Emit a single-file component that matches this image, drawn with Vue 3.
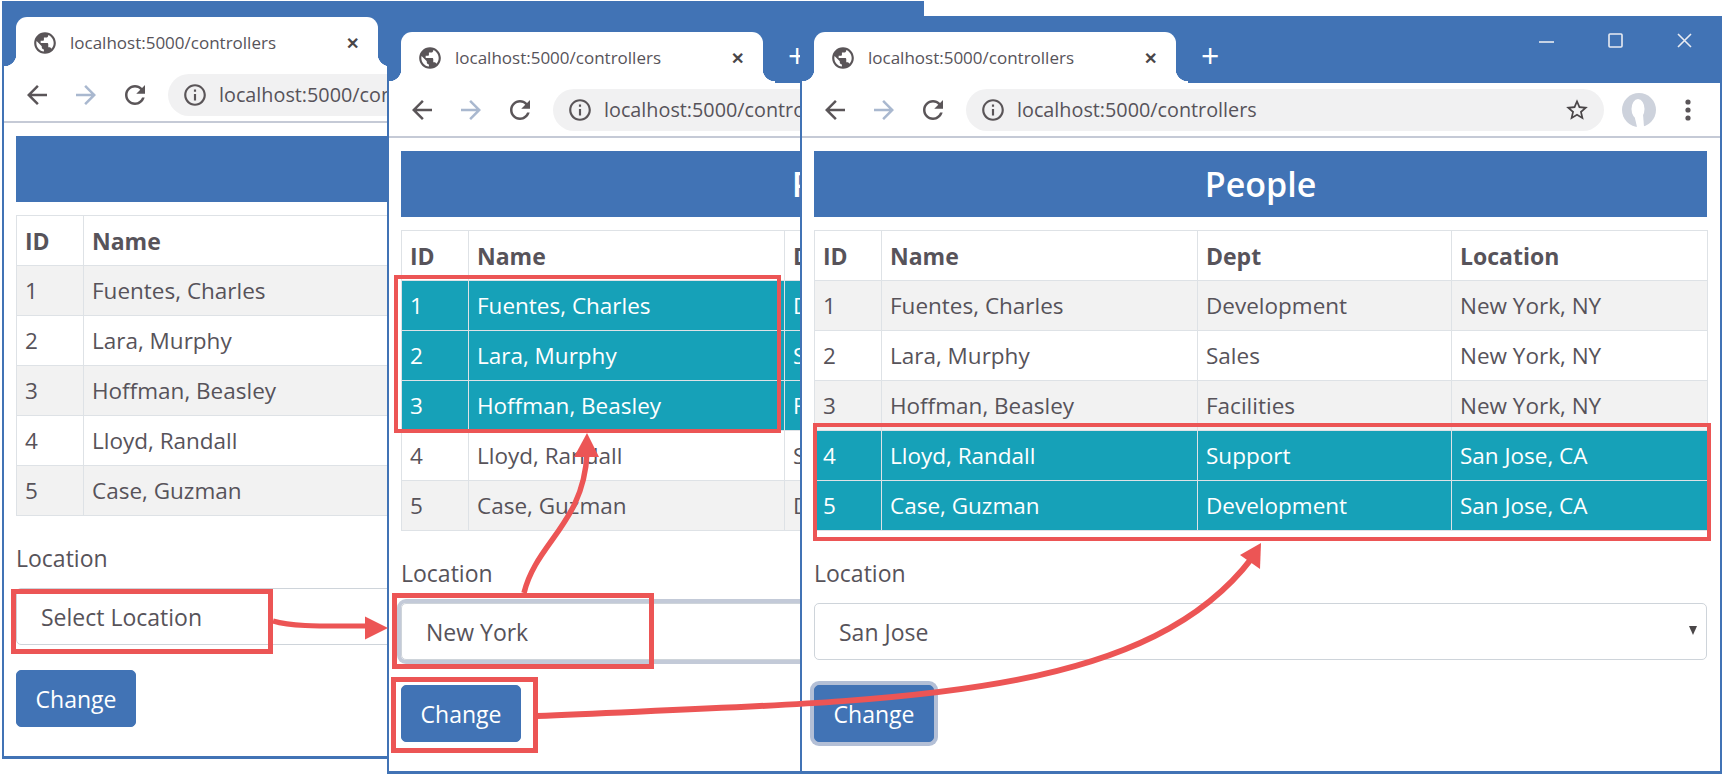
<script setup>
const people = [
  { id: 1, name: 'Fuentes, Charles', dept: 'Development', loc: 'New York, NY' },
  { id: 2, name: 'Lara, Murphy', dept: 'Sales', loc: 'New York, NY' },
  { id: 3, name: 'Hoffman, Beasley', dept: 'Facilities', loc: 'New York, NY' },
  { id: 4, name: 'Lloyd, Randall', dept: 'Support', loc: 'San Jose, CA' },
  { id: 5, name: 'Case, Guzman', dept: 'Development', loc: 'San Jose, CA' }
]
const windows = [
  { id: 'a', left: 2, top: 1, width: 922, select: 'Select Location', focus: '', hi: [] },
  { id: 'b', left: 387, top: 16, width: 925, select: 'New York', focus: 'sel', hi: [1, 2, 3] },
  { id: 'c', left: 800, top: 16, width: 922, select: 'San Jose', focus: 'btn', hi: [4, 5] }
]
const back = 'M20 11H7.83l5.59-5.59L12 4l-8 8 8 8 1.41-1.41L7.83 13H20v-2z'
const reload = 'M17.65 6.35C16.2 4.9 14.21 4 12 4c-4.42 0-7.99 3.58-7.99 8s3.57 8 7.99 8c3.73 0 6.84-2.55 7.73-6h-2.08c-.82 2.33-3.04 4-5.65 4-3.31 0-6-2.69-6-6s2.69-6 6-6c1.66 0 3.14.69 4.22 1.78L13 11h7V4l-2.35 2.35z'
const globe = 'M12 2C6.48 2 2 6.48 2 12s4.48 10 10 10 10-4.48 10-10S17.52 2 12 2zm-1 17.93c-3.95-.49-7-3.85-7-7.93 0-.62.08-1.21.21-1.79L9 15v1c0 1.1.9 2 2 2v1.93zm6.9-2.54c-.26-.81-1-1.39-1.9-1.39h-1v-3c0-.55-.45-1-1-1H8v-2h2c.55 0 1-.45 1-1V7h2c1.1 0 2-.9 2-2v-.41c2.93 1.19 5 4.06 5 7.41 0 2.08-.8 3.97-2.1 5.39z'
const info = 'M11 7h2v2h-2zm0 4h2v6h-2zm1-9C6.48 2 2 6.48 2 12s4.48 10 10 10 10-4.48 10-10S17.52 2 12 2zm0 18c-4.41 0-8-3.59-8-8s3.59-8 8-8 8 3.59 8 8-3.59 8-8 8z'
const star = 'M22 9.24l-7.19-.62L12 2 9.19 8.63 2 9.24l5.46 4.73L5.82 21 12 17.27 18.18 21l-1.63-7.03L22 9.24zM12 15.4l-3.76 2.27 1-4.28-3.32-2.88 4.38-.38L12 6.1l1.71 4.04 4.38.38-3.32 2.88 1 4.28L12 15.4z'
</script>

<template>
  <div class="desktop">
    <section
      v-for="w in windows"
      :key="w.id"
      class="window"
      :style="{ left: w.left + 'px', top: w.top + 'px', width: w.width + 'px' }"
    >
      <header class="frame">
        <div class="tab">
          <svg class="globe" viewBox="0 0 24 24"><path :d="globe" /></svg>
          <span class="tab-title">localhost:5000/controllers</span>
          <span class="tab-close">✕</span>
        </div>
        <span class="new-tab">+</span>
        <div class="controls">
          <svg viewBox="0 0 15 15"><path d="M0 9h15" /></svg>
          <svg viewBox="0 0 15 15"><rect x="1" y="1" width="13" height="13" rx="1" /></svg>
          <svg viewBox="0 0 15 15"><path d="M1 1l13 13M14 1l-13 13" /></svg>
        </div>
      </header>

      <nav class="toolbar">
        <svg class="tool" viewBox="0 0 24 24"><path :d="back" /></svg>
        <svg class="tool fwd" viewBox="0 0 24 24"><path :d="back" transform="translate(24 0) scale(-1 1)" /></svg>
        <svg class="tool" viewBox="0 0 24 24"><path :d="reload" /></svg>
        <div class="address">
          <svg class="info" viewBox="0 0 24 24"><path :d="info" /></svg>
          <span class="url">localhost:5000/controllers</span>
          <svg class="star" viewBox="0 0 24 24"><path :d="star" /></svg>
        </div>
        <svg class="avatar" viewBox="0 0 36 36">
          <circle cx="18" cy="18" r="17" fill="#cdd2dc" />
          <ellipse cx="17" cy="17" rx="6.5" ry="10" fill="#fff" />
          <path d="M13 22h9l1 13h-7z" fill="#fff" />
        </svg>
        <svg class="dots" viewBox="0 0 6 22"><circle cx="3" cy="3" r="2.6" /><circle cx="3" cy="11" r="2.6" /><circle cx="3" cy="19" r="2.6" /></svg>
      </nav>

      <main class="page">
        <h1 class="banner">People</h1>
        <table class="grid">
          <colgroup>
            <col class="c-id" /><col class="c-name" /><col class="c-dept" /><col class="c-loc" />
          </colgroup>
          <thead>
            <tr><th>ID</th><th>Name</th><th>Dept</th><th>Location</th></tr>
          </thead>
          <tbody>
            <tr
              v-for="p in people"
              :key="p.id"
              :class="{ hi: w.hi.includes(p.id), odd: p.id % 2 === 1 }"
            >
              <td>{{ p.id }}</td><td>{{ p.name }}</td><td>{{ p.dept }}</td><td>{{ p.loc }}</td>
            </tr>
          </tbody>
        </table>
        <label class="label">Location</label>
        <div class="select" :class="{ focused: w.focus === 'sel' }">
          <span>{{ w.select }}</span>
          <i class="caret"></i>
        </div>
        <button class="btn" :class="{ focused: w.focus === 'btn' }">Change</button>
      </main>
    </section>

    <svg class="notes" width="1725" height="777" viewBox="0 0 1725 777">
      <g fill="none" stroke="#ec5555" stroke-width="5">
        <rect x="13.5" y="591.5" width="257" height="60" />
        <rect x="394.5" y="595.5" width="257" height="71" />
        <rect x="393.5" y="679.5" width="142" height="71" />
        <rect x="396" y="277" width="383" height="154" stroke-width="4" />
        <rect x="815" y="425" width="894" height="114" stroke-width="4" />
        <path d="M273 621c20 6 50 5 94 5" />
        <path d="M524 593c12-50 60-70 63-140" stroke-width="5.5" />
        <path d="M537 716C880 700 1140 705 1252 558" stroke-width="6" />
      </g>
      <g fill="#ec5555">
        <path d="M388 628l-23 11.5v-23z" />
        <path d="M587 433l12 24h-25z" />
        <path d="M1261 543l-1 26-20-14z" />
      </g>
    </svg>
  </div>
</template>

<style scoped>
.desktop {
  position: relative;
  width: 1725px;
  height: 777px;
  overflow: hidden;
  background: #fff;
  font-family: "Open Sans", "Liberation Sans", sans-serif;
  color: #57535a;
}
.window {
  position: absolute;
  height: 758px;
  box-sizing: border-box;
  background: #fff;
  border: 2px solid #4173b5;
  border-width: 0 2px 3px 2px;
  overflow: hidden;
}
.frame {
  display: flex;
  align-items: flex-start;
  height: 67px;
  margin-left: -2px;
  padding: 16px 0 0 14px;
  box-sizing: border-box;
  background: #4173b5;
}
.tab {
  position: relative;
  display: flex;
  align-items: center;
  flex: none;
  width: 362px;
  height: 51px;
  box-sizing: border-box;
  padding: 0 19px 0 16px;
  background: #fff;
  border-radius: 11px 11px 0 0;
}
.tab::before,
.tab::after {
  content: "";
  position: absolute;
  bottom: 0;
  width: 12px;
  height: 14px;
}
.tab::before {
  left: -12px;
  background: radial-gradient(circle at 0 0, transparent 12px, #fff 12.5px);
}
.tab::after {
  right: -12px;
  background: radial-gradient(circle at 100% 0, transparent 12px, #fff 12.5px);
}
.globe {
  width: 26px;
  height: 26px;
  fill: #5a5558;
  flex: none;
}
.tab-title {
  margin-left: 12px;
  font-size: 17px;
  white-space: nowrap;
  flex: 1;
}
.tab-close {
  font-size: 16px;
  font-weight: 700;
  color: #4a4648;
}
.new-tab {
  margin: 4px 0 0 25px;
  color: #fff;
  font-size: 32px;
  line-height: 40px;
}
.controls {
  display: flex;
  gap: 54px;
  margin: 1px 28px 0 auto;
}
.controls svg {
  width: 15px;
  height: 15px;
  fill: none;
  stroke: #e9ecf2;
  stroke-width: 1.6;
}
.toolbar {
  display: flex;
  align-items: center;
  height: 55px;
  padding-left: 18px;
  box-sizing: border-box;
  border-bottom: 2px solid #c5cad6;
  gap: 19px;
}
.tool {
  width: 30px;
  height: 30px;
  flex: none;
  fill: #5a5558;
}
.tool.fwd {
  fill: #a9b8cf;
}
.address {
  display: flex;
  align-items: center;
  flex: none;
  width: 638px;
  height: 42px;
  box-sizing: border-box;
  padding: 0 14px;
  margin-left: -1px;
  border-radius: 21px;
  background: #f1f1f2;
}
.info {
  width: 26px;
  height: 26px;
  fill: #5a5558;
  flex: none;
}
.url {
  margin-left: 11px;
  flex: 1;
  font-size: 19.8px;
  white-space: nowrap;
}
.star {
  width: 26px;
  height: 26px;
  fill: #4a4648;
  flex: none;
}
.avatar {
  width: 36px;
  height: 36px;
  flex: none;
  margin-left: -2px;
}
.dots {
  width: 6px;
  height: 22px;
  flex: none;
  fill: #5a5558;
  margin-left: 9px;
}
.page {
  padding: 13px 0 0 12px;
  width: 905px;
  box-sizing: border-box;
}
.banner {
  margin: 0;
  height: 66px;
  line-height: 66px;
  text-align: center;
  background: #4173b5;
  color: #fff;
  font-size: 34px;
  font-weight: 600;
}
.grid {
  width: 893px;
  margin-top: 13px;
  table-layout: fixed;
  border-collapse: collapse;
  font-size: 22.5px;
}
.c-id { width: 67px; }
.c-name { width: 316px; }
.c-dept { width: 254px; }
.c-loc { width: 256px; }
.grid th,
.grid td {
  height: 50px;
  padding: 0 8px;
  box-sizing: border-box;
  text-align: left;
  border: 1px solid #dee2e6;
  white-space: nowrap;
}
.grid th {
  font-weight: 700;
  font-size: 23px;
}
.grid .odd td {
  background: #f2f2f2;
}
.grid .hi td {
  background: #16a1b8;
  color: #fff;
}
.label {
  display: block;
  margin-top: 27px;
  font-size: 23px;
  line-height: 30px;
}
.select {
  display: flex;
  align-items: center;
  justify-content: space-between;
  height: 57px;
  margin-top: 15px;
  padding: 0 9px 0 24px;
  box-sizing: border-box;
  font-size: 23px;
  border: 1px solid #ced4da;
  border-radius: 5px;
}
.select.focused {
  box-shadow: 0 0 0 4px #c3cad8;
}
.caret {
  width: 0;
  height: 0;
  margin-top: -2px;
  border-left: 4px solid transparent;
  border-right: 4px solid transparent;
  border-top: 9px solid #4a4648;
}
.btn {
  display: block;
  width: 120px;
  height: 57px;
  margin-top: 25px;
  padding: 0;
  border: 1px solid #4173b5;
  border-radius: 5px;
  background: #4173b5;
  color: #fff;
  font: 400 23px "Open Sans", "Liberation Sans", sans-serif;
}
.btn.focused {
  box-shadow: 0 0 0 4px #b3bfd6;
}
.notes {
  position: absolute;
  left: 0;
  top: 0;
  pointer-events: none;
}
</style>
